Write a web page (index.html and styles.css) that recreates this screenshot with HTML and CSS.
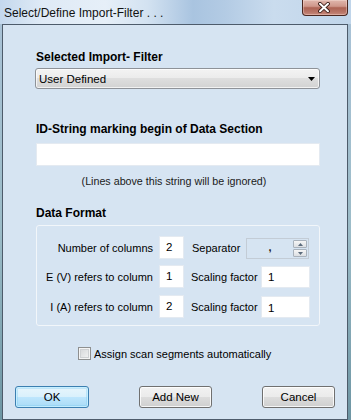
FILE: index.html
```html
<!DOCTYPE html>
<html>
<head>
<meta charset="utf-8">
<link rel="stylesheet" href="styles.css">
</head>
<body>
<div class="window">
  <div class="titlebar">
    <span class="title">Select/Define Import-Filter . . .</span>
    <div class="close">
      <svg width="14" height="11" viewBox="0 0 14 11">
        <path d="M3 1.8 L11 9.2 M11 1.8 L3 9.2" stroke="#3a1c16" stroke-width="3.8" stroke-linecap="round" fill="none"/>
        <path d="M3 1.8 L11 9.2 M11 1.8 L3 9.2" stroke="#ffffff" stroke-width="2" stroke-linecap="round" fill="none"/>
      </svg>
    </div>
  </div>
  <div class="client">
    <div class="content">
      <div class="label">Selected Import- Filter</div>
      <div class="select">
        <span>User Defined</span>
        <svg class="arrow" width="7" height="4" viewBox="0 0 7 4"><path d="M0 0 H7 L3.5 4 Z" fill="#000"/></svg>
      </div>
      <div class="label l2">ID-String marking begin of Data Section</div>
      <div class="textbox"></div>
      <div class="note">(Lines above this string will be ignored)</div>
      <div class="label l3">Data Format</div>
      <div class="group">
        <div class="row">
          <span class="rlabel">Number of columns</span>
          <div class="field small">2</div>
          <span class="clabel sep">Separator</span>
          <div class="spin">
            <div class="spinval">,</div>
            <div class="spinbtns">
              <div class="sb"><svg width="5" height="3" viewBox="0 0 5 3"><path d="M0 3 H5 L2.5 0 Z" fill="#5b6b7c"/></svg></div>
              <div class="sb"><svg width="5" height="3" viewBox="0 0 5 3"><path d="M0 0 H5 L2.5 3 Z" fill="#5b6b7c"/></svg></div>
            </div>
          </div>
        </div>
        <div class="row r2">
          <span class="rlabel">E (V) refers to column</span>
          <div class="field small">1</div>
          <span class="clabel scal">Scaling factor</span>
          <div class="field wide">1</div>
        </div>
        <div class="row r3">
          <span class="rlabel">I (A) refers to column</span>
          <div class="field small">2</div>
          <span class="clabel scal">Scaling factor</span>
          <div class="field wide low">1</div>
        </div>
      </div>
      <div class="check">
        <span class="box"></span>
        <span class="checktext">Assign scan segments automatically</span>
      </div>
    </div>
    <div class="buttons">
      <div class="btn default">OK</div>
      <div class="btn">Add New</div>
      <div class="btn">Cancel</div>
    </div>
  </div>
</div>
</body>
</html>
```
FILE: styles.css
```css
* { box-sizing: border-box; }
html, body { margin: 0; padding: 0; }
body {
  width: 351px;
  height: 420px;
  overflow: hidden;
  font-family: "Liberation Sans", Arial, sans-serif;
  font-size: 11px;
  color: #000;
}
.window {
  height: 420px;
  display: flex;
  flex-direction: column;
  padding: 0 3px 0 2px;
  background:
    linear-gradient(to bottom, rgba(0,0,0,0) 0, rgba(0,0,0,0) 24px, #a9c2d6 24px, #9cbcc8 55%, #6d95a3 100%),
    linear-gradient(90deg, #c4d8ed 0%, #dfeaf6 12%, #e6eff8 30%, #d3e2f1 42%, #a9c4e0 55%, #b3cbe4 64%, #cadcee 78%, #c0d5ea 100%);
}
.titlebar {
  height: 24px;
  display: flex;
  justify-content: space-between;
  align-items: flex-start;
}
.title {
  font-size: 12px;
  line-height: 14px;
  padding: 6px 0 0 2px;
  color: #111;
}
.close {
  width: 46px;
  height: 16px;
  border: 1px solid #4a2720;
  border-top: none;
  border-radius: 0 0 4px 4px;
  background: linear-gradient(#e0b7ad 0%, #cf978b 42%, #ad6354 52%, #b87567 80%, #c98a7c 100%);
  box-shadow: inset 0 0 0 1px rgba(255, 235, 230, 0.35);
  display: flex;
  justify-content: center;
  align-items: center;
  padding-right: 2px;
}
.client {
  flex: 1;
  border: 1px solid #4d5b6b;
  background: #d6e4f2;
  padding: 0 12px;
}
.content {
  padding: 25px 15px 0 21px;
}
.label {
  font-weight: bold;
  font-size: 12px;
  line-height: 14px;
}
.l2 { margin-top: 33px; }
.l3 { margin-top: 18px; }
.select {
  margin-top: 4px;
  margin-left: -1px;
  height: 21px;
  border: 1px solid #8e9298;
  border-radius: 3px;
  background: linear-gradient(#f3f3f3 0%, #ebebeb 50%, #dedede 50%, #d2d2d2 100%);
  box-shadow: inset 0 0 0 1px rgba(255,255,255,0.7);
  display: flex;
  justify-content: space-between;
  align-items: center;
  padding: 0 4px 0 3px;
  font-size: 11.5px;
}
.textbox {
  margin-top: 7px;
  height: 23px;
  background: #fff;
  border: 1px solid #e4eaf1;
}
.note {
  margin-top: 8px;
  line-height: 14px;
  font-size: 10.7px;
  text-align: center;
  padding-right: 8px;
  color: #1a1a1a;
}
.group {
  margin-top: 5px;
  border: 1px solid #f2f6fa;
  border-radius: 3px;
  padding: 10px 0 7px 0;
}
.row {
  display: flex;
  align-items: center;
  height: 23px;
}
.r2 { margin-top: 6px; }
.r3 { margin-top: 7px; }
.rlabel {
  width: 116px;
  text-align: right;
}
.field {
  height: 23px;
  background: #fff;
  border: 1px solid #e4eaf1;
  padding-left: 6px;
  line-height: 21px;
  font-size: 11.5px;
}
.small { width: 25px; margin-left: 6px; }
.wide { width: 49px; height: 22px; align-self: flex-end; line-height: 20px; }
.low { line-height: 22px; }
.clabel.sep { margin-left: 8px; width: 54px; padding-top: 1px; }
.clabel.scal { margin-left: 7px; width: 70px; }
.spin {
  width: 63px;
  height: 21px;
  border: 1px solid #c3ccd6;
  display: flex;
  margin-top: 2px;
}
.spinval {
  flex: 1;
  text-align: center;
  line-height: 17px;
  color: #222;
  font-weight: bold;
}
.spinbtns {
  width: 15px;
  display: flex;
  flex-direction: column;
  padding: 1px 1px 1px 0;
  gap: 1px;
}
.sb {
  flex: 1;
  border: 1px solid #a9b2bc;
  border-radius: 1px;
  background: linear-gradient(#f6f6f6, #dcdfe3);
  display: flex;
  justify-content: center;
  align-items: center;
}
.check {
  display: flex;
  align-items: center;
  margin-top: 21px;
  margin-left: 42px;
  height: 13px;
  gap: 3px;
}
.box {
  width: 13px;
  height: 13px;
  border: 1px solid #8e8f8f;
  background: linear-gradient(135deg, #d2d4d6, #f6f6f6);
  box-shadow: inset 0 0 0 1px #f4f4f4, inset 0 0 0 2px #cfd1d3;
}
.checktext {
  font-size: 11px;
}
.buttons {
  display: flex;
  justify-content: space-between;
  margin-top: 26px;
}
.btn {
  width: 73px;
  height: 22px;
  border: 1px solid #707070;
  border-radius: 3px;
  background: linear-gradient(#f2f2f2 0%, #ebebeb 50%, #dddddd 50%, #cfcfcf 100%);
  box-shadow: inset 0 0 0 1px rgba(255,255,255,0.8);
  display: flex;
  justify-content: center;
  align-items: center;
  font-size: 11.5px;
}
.btn.default {
  width: 74px;
  border-color: #3c7fb1;
  background: linear-gradient(#e8f5fc 0%, #d9f0fc 50%, #bee6fd 50%, #a9dbf6 100%);
  box-shadow: inset 0 0 0 1px rgba(200,240,255,0.9), inset 0 0 0 2px rgba(120,200,240,0.35);
}
```
